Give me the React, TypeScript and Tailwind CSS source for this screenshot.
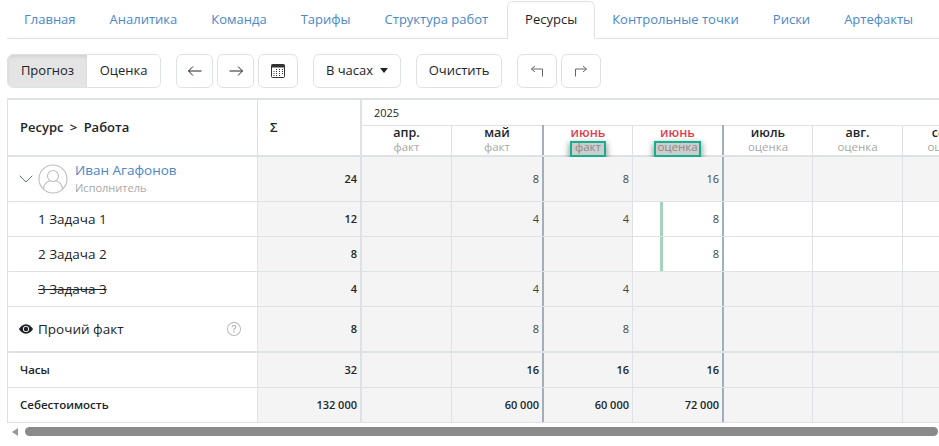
import { BsEyeFill, BsQuestionCircle } from "react-icons/bs";
import { ChevronDown } from "lucide-react";

const tabs = ["Главная", "Аналитика", "Команда", "Тарифы", "Структура работ", "Ресурсы", "Контрольные точки", "Риски", "Артефакты"];

const months = [
  { name: "апр.", sub: "факт", first: true },
  { name: "май", sub: "факт" },
  { name: "июнь", sub: "факт", red: true, mark: true, thick: true },
  { name: "июнь", sub: "оценка", red: true, mark: true },
  { name: "июль", sub: "оценка", thick: true },
  { name: "авг.", sub: "оценка" },
  { name: "сент.", sub: "оценка" },
];

const cellWidths = ["w-[89px]", "w-[91px]", "w-[90px]", "w-[90px]", "w-[90px]", "w-[90px]", "w-[90px]"];

type Row = {
  key: string;
  height: string;
  label: React.ReactNode;
  total: string;
  values: string[];
  white?: number[];
  bar?: boolean;
  bold?: boolean;
  thickBottom?: boolean;
};

function CalendarIcon() {
  return (
    <svg width="16" height="16" viewBox="0 0 16 16" fill="none">
      <rect x="1.500" y="1.500" width="13" height="13" rx="1" stroke="#333" />
      <rect x="1.500" y="1.500" width="13" height="3" fill="#333" />
      <path d="M6 6.500h1M9 6.500h1M12 6.500h1M3.500 8.500h1M6 8.500h1M9 8.500h1M12 8.500h1M3.500 10.500h1M6 10.500h1M9 10.500h1M12 10.500h1M3.500 12.500h1M6 12.500h1M9 12.500h1" stroke="#333" />
    </svg>
  );
}

function ArrowIcon({ flip }: { flip?: boolean }) {
  return (
    <svg width="16" height="16" viewBox="0 0 16 16" fill="none" className={flip ? "rotate-180" : ""}>
      <path d="M1.500 8h13M6 3.500 1.500 8 6 12.500" stroke="#222" strokeWidth="1" />
    </svg>
  );
}

function ReturnIcon({ flip }: { flip?: boolean }) {
  return (
    <svg width="16" height="16" viewBox="0 0 16 16" fill="none" className={flip ? "-scale-x-100" : ""}>
      <path d="M13.500 13.500V6H2.500M6 3 2.500 6 6 9" stroke="#666" strokeWidth="1" />
    </svg>
  );
}

function Avatar() {
  return (
    <svg width="30" height="30" viewBox="0 0 30 30" fill="none" stroke="#bdbdbd" strokeWidth="1.100">
      <circle cx="15" cy="15" r="14" />
      <circle cx="15" cy="12" r="5.500" />
      <path d="M5.500 25c.5-5.500 4-7.500 6.500-8.200M24.500 25c-.5-5.500-4-7.500-6.500-8.200" />
    </svg>
  );
}

const rows: Row[] = [
  {
    key: "ivan",
    height: "h-[45px]",
    total: "24",
    values: ["", "8", "8", "16", "", "", ""],
    label: (
      <div className="flex items-center pl-[6px]">
        <ChevronDown size={24} strokeWidth={1} className="text-[#4f7396]" />
        <Avatar />
        <div className="ml-[7px] -mt-[2px] flex flex-col">
          <span className="text-[13.500px] leading-[20px] text-[#4a86c8]">Иван Агафонов</span>
          <span className="text-[11px] leading-[16px] text-[#a8a8a8]">Исполнитель</span>
        </div>
      </div>
    ),
  },
  {
    key: "t1",
    height: "h-[35px]",
    total: "12",
    values: ["", "4", "4", "8", "", "", ""],
    white: [3, 4, 5, 6],
    bar: true,
    label: <span className="pl-[30px] text-[13.500px] text-[#212529]">1 Задача 1</span>,
  },
  {
    key: "t2",
    height: "h-[35px]",
    total: "8",
    values: ["", "", "", "8", "", "", ""],
    white: [3, 4, 5, 6],
    bar: true,
    label: <span className="pl-[30px] text-[13.500px] text-[#212529]">2 Задача 2</span>,
  },
  {
    key: "t3",
    height: "h-[35px]",
    total: "4",
    values: ["", "4", "4", "", "", "", ""],
    label: <span className="pl-[30px] text-[13.500px] text-[#212529] line-through">3 Задача 3</span>,
  },
  {
    key: "other",
    height: "h-[46px]",
    total: "8",
    values: ["", "8", "8", "", "", "", ""],
    thickBottom: true,
    label: (
      <div className="flex w-full items-center pl-[11px] pr-[16px]">
        <BsEyeFill size={14} className="text-[#212529]" />
        <span className="ml-[5px] text-[13.500px] text-[#212529]">Прочий факт</span>
        <BsQuestionCircle size={14} className="ml-auto text-[#b5b5b5]" />
      </div>
    ),
  },
  {
    key: "hours",
    height: "h-[35px]",
    total: "32",
    values: ["", "16", "16", "16", "", "", ""],
    bold: true,
    label: <span className="pl-[12px] text-[11.500px] font-semibold text-[#212529]">Часы</span>,
  },
  {
    key: "cost",
    height: "h-[35px]",
    total: "132 000",
    values: ["", "60 000", "60 000", "72 000", "", "", ""],
    bold: true,
    label: <span className="pl-[12px] text-[11.500px] font-semibold text-[#212529]">Себестоимость</span>,
  },
];

function monthBorder(m: { thick?: boolean; first?: boolean }) {
  if (m.first) return "";
  return m.thick ? "border-l-2 border-l-[#a3aebb]" : "border-l border-l-[#dee2e6]";
}

function TableRow({ row }: { row: Row }) {
  const border = row.thickBottom ? "border-b-2" : "border-b";
  return (
    <div className={`flex ${row.height} ${border} border-[#dee2e6]`}>
      <div className="flex w-[250px] shrink-0 items-center border-r border-[#dee2e6] bg-white">{row.label}</div>
      <div className="flex w-[104px] shrink-0 items-center justify-end border-r-2 border-[#dee2e6] bg-[#f4f4f4] pr-[3px] text-[11px] font-semibold text-[#212529]">
        {row.total}
      </div>
      {months.map((m, i) => {
        const white = row.white?.includes(i);
        return (
          <div
            key={i}
            className={`relative flex ${cellWidths[i]} shrink-0 items-center justify-end pr-[3px] text-[11px] ${
              row.bold ? "font-semibold text-[#212529]" : "text-[#444]"
            } ${white ? "bg-white" : "bg-[#f4f4f4]"} ${monthBorder(m)}`}
          >
            {row.bar && i === 3 && <div className="absolute bottom-0 left-[27px] top-0 w-[3px] bg-[#a5d3bb]" />}
            {row.values[i]}
          </div>
        );
      })}
    </div>
  );
}

export default function App() {
  return (
    <div className="h-[446px] w-[939px] overflow-hidden bg-white font-['Open_Sans',sans-serif] text-[#212529]">
      <nav className="ml-[7px] mt-[1px] flex h-[38px] border-b border-[#dee2e6] text-[13px] whitespace-nowrap">
        {tabs.map((t) =>
          t === "Ресурсы" ? (
            <div key={t} className="-mb-px ml-[2px] flex items-center rounded-t-md border border-[#dee2e6] border-b-white bg-white px-[17px] text-[#212529]">
              {t}
            </div>
          ) : (
            <div key={t} className="flex items-center border border-transparent px-[16px] text-[#4a88c7]">
              {t}
            </div>
          )
        )}
      </nav>

      <div className="ml-[7px] mt-[15px] flex h-[34px] items-stretch text-[13px]">
        <div className="flex overflow-hidden rounded-md border border-[#dee2e6]">
          <div className="flex w-[79px] items-center justify-center bg-[#e4e4e4] shadow-[inset_0_2px_3px_rgba(0,0,0,0.08)]">Прогноз</div>
          <div className="flex w-[73px] items-center justify-center bg-white">Оценка</div>
        </div>
        <div className="ml-[15px] flex w-[37px] items-center justify-center rounded-md border border-[#dee2e6]"><ArrowIcon /></div>
        <div className="ml-[4px] flex w-[37px] items-center justify-center rounded-md border border-[#dee2e6]"><ArrowIcon flip /></div>
        <div className="ml-[4px] flex w-[40px] items-center justify-center rounded-md border border-[#dee2e6]"><CalendarIcon /></div>
        <div className="ml-[15px] flex w-[88px] items-center justify-center gap-[7px] rounded-md border border-[#dee2e6]">
          В часах
          <span className="-mt-[2px] h-0 w-0 border-x-[4px] border-t-[5px] border-x-transparent border-t-[#212529]" />
        </div>
        <div className="ml-[15px] flex w-[86px] items-center justify-center rounded-md border border-[#dee2e6]">Очистить</div>
        <div className="ml-[15px] flex w-[40px] items-center justify-center rounded-md border border-[#dee2e6]"><ReturnIcon /></div>
        <div className="ml-[4px] flex w-[40px] items-center justify-center rounded-md border border-[#dee2e6]"><ReturnIcon flip /></div>
      </div>

      <div className="ml-[7px] mt-[10px] border-t-2 border-l border-[#dee2e6]">
        <div className="flex h-[57px] border-b-2 border-[#dee2e6]">
          <div className="flex w-[250px] shrink-0 items-center border-r border-[#dee2e6] pl-[12px] text-[13px] font-semibold [word-spacing:3px]">Ресурс &gt; Работа</div>
          <div className="flex w-[104px] shrink-0 items-center border-r-2 border-[#dee2e6] pl-[12px] text-[13px] font-semibold">Σ</div>
          <div className="flex min-w-0 flex-col">
            <div className="flex h-[26px] items-center border-b border-[#dee2e6] pl-[12px] pt-[1px] text-[11px]">2025</div>
            <div className="-mt-[1px] flex flex-1">
              {months.map((m, i) => (
                <div key={i} className={`flex ${cellWidths[i]} shrink-0 flex-col items-center whitespace-nowrap ${monthBorder(m)}`}>
                  <span className={`text-[12.500px] leading-[15px] font-semibold ${m.red ? "text-[#e23d4f]" : "text-[#212529]"}`}>{m.name}</span>
                  {m.mark ? (
                    <span className="mt-[3px] h-[12px] min-w-[32px] bg-[#cdcdcd] px-[1px] text-center text-[11.500px] leading-[8px] text-[#8a8a8a] outline-2 outline-[#12b08f] shadow-[0_3px_6px_3px_rgba(0,0,0,0.4)]">
                      {m.sub}
                    </span>
                  ) : (
                    <span className="text-[11.500px] leading-[14px] text-[#a8a8a8]">{m.sub}</span>
                  )}
                </div>
              ))}
            </div>
          </div>
        </div>
        {rows.map((r) => (
          <TableRow key={r.key} row={r} />
        ))}
      </div>

      <div className="ml-[7px] mt-[4px] flex h-[9px] items-center">
        <span className="ml-[5px] h-0 w-0 border-y-[4px] border-r-[6px] border-y-transparent border-r-[#999]" />
        <div className="ml-[7px] mr-[1px] h-[9px] flex-1 rounded-full bg-[#8a8a8a]" />
      </div>
    </div>
  );
}
